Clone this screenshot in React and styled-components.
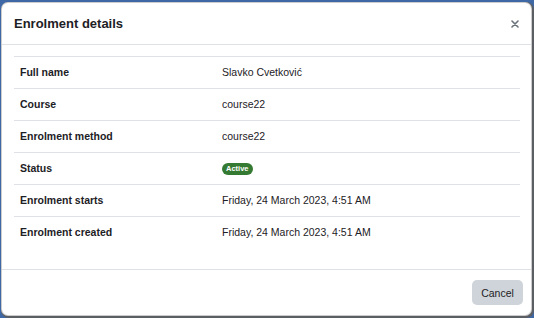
import React from "react";
import styled, { createGlobalStyle } from "styled-components";

const Global = createGlobalStyle`
  html, body { margin: 0; padding: 0; }
  body {
    width: 534px;
    height: 318px;
    overflow: hidden;
    background: #3f68a6;
    font-family: "Liberation Sans", Arial, sans-serif;
    color: #1d2125;
  }
  #root { padding: 2px 2px 0 1px; }
`;

const Modal = styled.div`
  width: 531px;
  height: 314px;
  box-sizing: border-box;
  background: #fff;
  border: 1px solid rgba(0, 0, 0, 0.2);
  border-radius: 7px;
  box-shadow: 1px 1px 0 1px #5b5e63;
  display: flex;
  flex-direction: column;
  overflow: hidden;
`;

const Header = styled.div`
  height: 42px;
  box-sizing: border-box;
  border-bottom: 1px solid #dee2e6;
  display: flex;
  align-items: center;
  justify-content: space-between;
  padding: 0 10px 0 12px;
`;

const Title = styled.h5`
  margin: 0;
  font-size: 13px;
  font-weight: 700;
  color: #1d2125;
`;

const Close = styled.button`
  border: 0;
  background: none;
  padding: 0;
  width: 12px;
  height: 12px;
  display: flex;
  align-items: center;
  justify-content: center;
  cursor: pointer;
`;

const Body = styled.div`
  flex: 1;
  padding: 11px 11px 0 12px;
  border-bottom: 1px solid #dee2e6;
`;

const Table = styled.div`
  display: flex;
  flex-direction: column;
  border-top: 1px solid #dee2e6;
`;

const Row = styled.div`
  display: grid;
  grid-template-columns: 202px 1fr;
  height: 32px;
  box-sizing: border-box;
  align-items: center;
  padding: 0 6px 1px 6px;
  border-bottom: 1px solid ${(p) => (p.$last ? "transparent" : "#dee2e6")};
  font-size: 10.5px;
`;

const Label = styled.div`
  font-weight: 700;
  color: #1d2125;
`;

const Value = styled.div`
  color: #1d2125;
`;

const Badge = styled.span`
  display: inline-block;
  background: #357a32;
  color: #fff;
  font-size: 7.5px;
  font-weight: 700;
  padding: 2px 4px;
  border-radius: 6px;
  line-height: 8px;
`;

const Footer = styled.div`
  height: 45px;
  display: flex;
  align-items: center;
  justify-content: flex-end;
  padding: 0 8px;
`;

const Button = styled.button`
  width: 51px;
  height: 25px;
  border: 0;
  border-radius: 5px;
  background: #ced4da;
  color: #1d2125;
  font-family: "Liberation Sans", Arial, sans-serif;
  font-size: 10.5px;
  padding: 0;
`;

const rows = [
  ["Full name", "Slavko Cvetković"],
  ["Course", "course22"],
  ["Enrolment method", "course22"],
  ["Status", null],
  ["Enrolment starts", "Friday, 24 March 2023, 4:51 AM"],
  ["Enrolment created", "Friday, 24 March 2023, 4:51 AM"],
];

export default function App() {
  return (
    <>
      <Global />
      <Modal>
        <Header>
          <Title>Enrolment details</Title>
          <Close aria-label="Close">
            <svg width="8" height="8" viewBox="0 0 8 8">
              <path d="M1 1L7 7M7 1L1 7" stroke="#6a737b" strokeWidth="1.6" strokeLinecap="round" />
            </svg>
          </Close>
        </Header>
        <Body>
          <Table>
            {rows.map(([l, v], i) => (
              <Row key={l} $last={i === rows.length - 1}>
                <Label>{l}</Label>
                <Value>{v === null ? <Badge>Active</Badge> : v}</Value>
              </Row>
            ))}
          </Table>
        </Body>
        <Footer>
          <Button>Cancel</Button>
        </Footer>
      </Modal>
    </>
  );
}
